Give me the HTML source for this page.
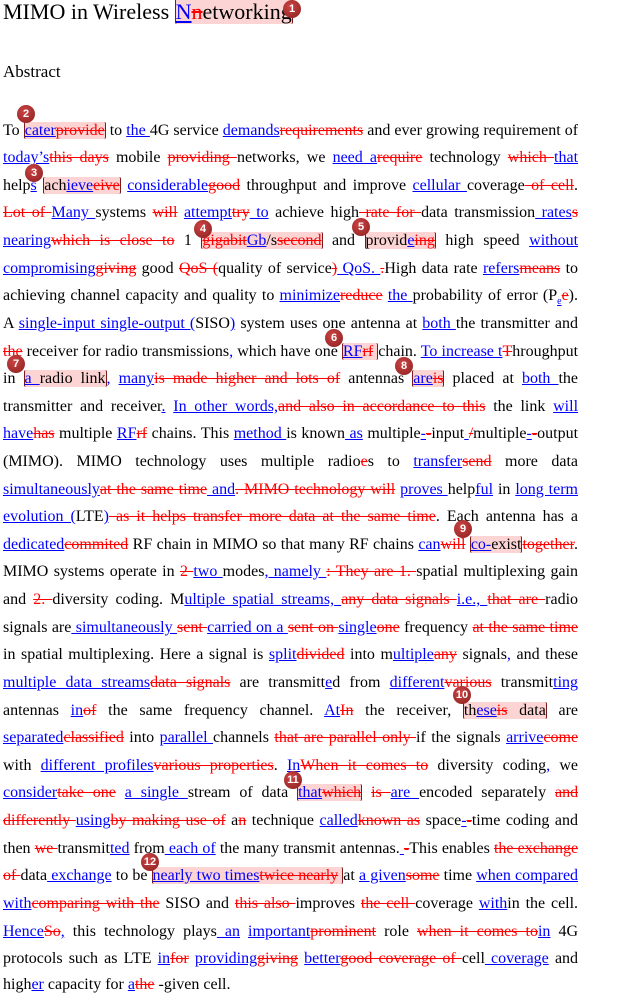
<!DOCTYPE html>
<html><head><meta charset="utf-8"><style>
html,body{margin:0;padding:0;background:#fff;width:630px;height:998px;overflow:hidden;position:relative}
body{font-family:"Liberation Serif",serif;color:#000}
#w{position:absolute;left:0;top:2px;width:630px;height:996px}
.t{position:absolute;left:3px;top:-3px;font-size:22px;white-space:nowrap}
.h{position:absolute;left:3px;top:60px;font-size:17px}
.l{position:absolute;left:3px;width:575px;height:20px;line-height:18px;font-size:16px;text-align:justify;text-align-last:justify;overflow:hidden;white-space:normal}
.l.e{text-align-last:left}
ins{color:#00f;text-decoration:underline}
del{color:#f00;text-decoration:line-through}
.c{background:#fcd4d4;border-left:1px solid #7a1a1a;border-right:1px solid #7a1a1a;border-radius:2px;font-weight:normal}
.n{position:absolute;width:18px;height:18px;border-radius:50%;background:radial-gradient(circle at 40% 35%,#c44,#8a1f1f);color:#fff;font:bold 11px "Liberation Sans",sans-serif;text-align:center;line-height:18px}
sub{font-size:10px}
</style></head><body><div id="w">
<div class="t">MIMO in Wireless <span class="c"><ins>N</ins><del>n</del>etworking</span></div>
<div class="h">Abstract</div>

<div class="l" style="top:120px">To <span class="c"><ins>cater</ins><del>provide</del></span> to <ins>the </ins>4G service <ins>demands</ins><del>requirements</del> and ever growing requirement of</div>
<div class="l" style="top:147px"><ins>today’s</ins><del>this days</del> mobile <del>providing </del>networks, we <ins>need a</ins><del>require</del> technology <del>which </del><ins>that</ins></div>
<div class="l" style="top:175px">help<ins>s</ins> <span class="c">ach<ins>ieve</ins><del>eive</del></span> <ins>considerable</ins><del>good</del> throughput and improve <ins>cellular </ins>coverage<del> of cell</del>.</div>
<div class="l" style="top:202px"><del>Lot of </del><ins>Many </ins>systems <del>will</del> <ins>attempt</ins><del>try</del><ins> to</ins> achieve high<del> rate for </del>data transmission<ins> rates</ins><del>s</del></div>
<div class="l" style="top:230px"><ins>nearing</ins><del>which is close to</del> 1 <span class="c"><del>gigabit</del><ins>Gb</ins>/s<del>second</del></span> and <span class="c">provid<ins>e</ins><del>ing</del></span> high speed <ins>without</ins></div>
<div class="l" style="top:258px"><ins>compromising</ins><del>giving</del> good <del>QoS (</del>quality of service<del>)</del><ins> QoS. </ins><del>.</del>High data rate <ins>refers</ins><del>means</del> to</div>
<div class="l" style="top:285px">achieving channel capacity and quality to <ins>minimize</ins><del>reduce</del> <ins>the </ins>probability of error (P<sub><ins>e</ins></sub><del>e</del>).</div>
<div class="l" style="top:313px">A <ins>single-input single-output (</ins>SISO<ins>)</ins> system uses one antenna at <ins>both </ins>the transmitter and</div>
<div class="l" style="top:341px"><del>the</del> receiver for radio transmissions<ins>,</ins> which have one <span class="c"><ins>RF</ins><del>rf</del> </span>chain. <ins>To increase t</ins><del>T</del>hroughput</div>
<div class="l" style="top:368px">in <span class="c"><ins>a </ins>radio link</span><ins>,</ins> <ins>many</ins><del>is made higher and lots of</del> antennas <span class="c"><ins>are</ins><del>is</del></span> placed at <ins>both </ins>the</div>
<div class="l" style="top:396px">transmitter and receiver<ins>.</ins> <ins>In other words,</ins><del>and also in accordance to this</del> the link <ins>will</ins></div>
<div class="l" style="top:423px"><ins>have</ins><del>has</del> multiple <ins>RF</ins><del>rf</del> chains. This <ins>method </ins>is known<ins> as</ins> multiple<ins>-</ins><del>-</del>input<ins> </ins><del>/</del>multiple<ins>-</ins><del>-</del>output</div>
<div class="l" style="top:451px">(MIMO). MIMO technology uses multiple radio<del>e</del>s to <ins>transfer</ins><del>send</del> more data</div>
<div class="l" style="top:479px"><ins>simultaneously</ins><del>at the same time</del><ins> and</ins><del>. MIMO technology will</del> <ins>proves </ins>help<ins>ful</ins> in <ins>long term</ins></div>
<div class="l" style="top:506px"><ins>evolution (</ins>LTE<ins>)</ins><del> as it helps transfer more data at the same time</del>. Each antenna has a</div>
<div class="l" style="top:534px"><ins>dedicated</ins><del>commited</del> RF chain in MIMO so that many RF chains <ins>can</ins><del>will</del> <span class="c"><ins>co-</ins>exist</span><del>together</del>.</div>
<div class="l" style="top:561px">MIMO systems operate in <del>2 </del><ins>two </ins>modes<ins>, namely </ins><del>: They are 1. </del>spatial multiplexing gain</div>
<div class="l" style="top:589px">and <del>2. </del>diversity coding. M<ins>ultiple spatial streams, </ins><del>any data signals </del><ins>i.e., </ins><del>that are </del>radio</div>
<div class="l" style="top:617px">signals are<ins> simultaneously </ins><del>sent </del><ins>carried on a </ins><del>sent on </del><ins>single</ins><del>one</del> frequency <del>at the same time</del></div>
<div class="l" style="top:644px">in spatial multiplexing. Here a signal is <ins>split</ins><del>divided</del> into m<ins>ultiple</ins><del>any</del> signals<ins>,</ins> and these</div>
<div class="l" style="top:672px"><ins>multiple data streams</ins><del>data signals</del> are transmitt<ins>e</ins>d from <ins>different</ins><del>various</del> transmit<ins>ting</ins></div>
<div class="l" style="top:700px">antennas <ins>in</ins><del>of</del> the same frequency channel. <ins>At</ins><del>In</del> the receiver, <span class="c">th<ins>ese</ins><del>is</del> data</span> are</div>
<div class="l" style="top:727px"><ins>separated</ins><del>classified</del> into <ins>parallel </ins>channels <del>that are parallel only </del>if the signals <ins>arrive</ins><del>come</del></div>
<div class="l" style="top:755px">with <ins>different profiles</ins><del>various properties</del>. <ins>In</ins><del>When it comes to</del> diversity coding<ins>,</ins> we</div>
<div class="l" style="top:782px"><ins>consider</ins><del>take one</del> <ins>a single </ins>stream of data <span class="c"><ins>that</ins><del>which</del></span> <del>is </del><ins>are </ins>encoded separately <del>and</del></div>
<div class="l" style="top:810px"><del>differently </del><ins>using</ins><del>by making use of</del> a<del>n</del> technique <ins>called</ins><del>known as</del> space<ins>-</ins><del>-</del>time coding and</div>
<div class="l" style="top:838px">then <del>we </del>transmit<ins>ted</ins> from<ins> each of</ins> the many transmit antennas.<ins> </ins><del>-</del>This enables <del>the exchange</del></div>
<div class="l" style="top:865px"><del>of </del>data<ins> exchange</ins> to be <span class="c"><ins>nearly two times</ins><del>twice nearly</del> </span>at <ins>a given</ins><del>some</del> time <ins>when compared</ins></div>
<div class="l" style="top:893px"><ins>with</ins><del>comparing with the</del> SISO and <del>this also </del>improves <del>the cell </del>coverage <ins>with</ins>in the cell.</div>
<div class="l" style="top:921px"><ins>Hence</ins><del>So</del><ins>,</ins> this technology plays<ins> an</ins> <ins>important</ins><del>prominent</del> role <del>when it comes to</del><ins>in</ins> 4G</div>
<div class="l" style="top:948px">protocols such as LTE <ins>in</ins><del>for</del> <ins>providing</ins><del>giving</del> <ins>better</ins><del>good coverage of </del><ins> </ins>cell<ins> coverage</ins> and</div>
<div class="l e" style="top:974px">high<ins>er</ins> capacity for <ins>a</ins><del>the</del> -given cell.</div>

<div class="n" style="left:283px;top:-2px">1</div>
<div class="n" style="left:17px;top:103px">2</div>
<div class="n" style="left:25px;top:162px">3</div>
<div class="n" style="left:194px;top:218px">4</div>
<div class="n" style="left:352px;top:216px">5</div>
<div class="n" style="left:325px;top:327px">6</div>
<div class="n" style="left:7px;top:353px">7</div>
<div class="n" style="left:395px;top:355px">8</div>
<div class="n" style="left:454px;top:518px">9</div>
<div class="n" style="left:453px;top:684px">10</div>
<div class="n" style="left:284px;top:769px">11</div>
<div class="n" style="left:141px;top:851px">12</div>
</div></body></html>
